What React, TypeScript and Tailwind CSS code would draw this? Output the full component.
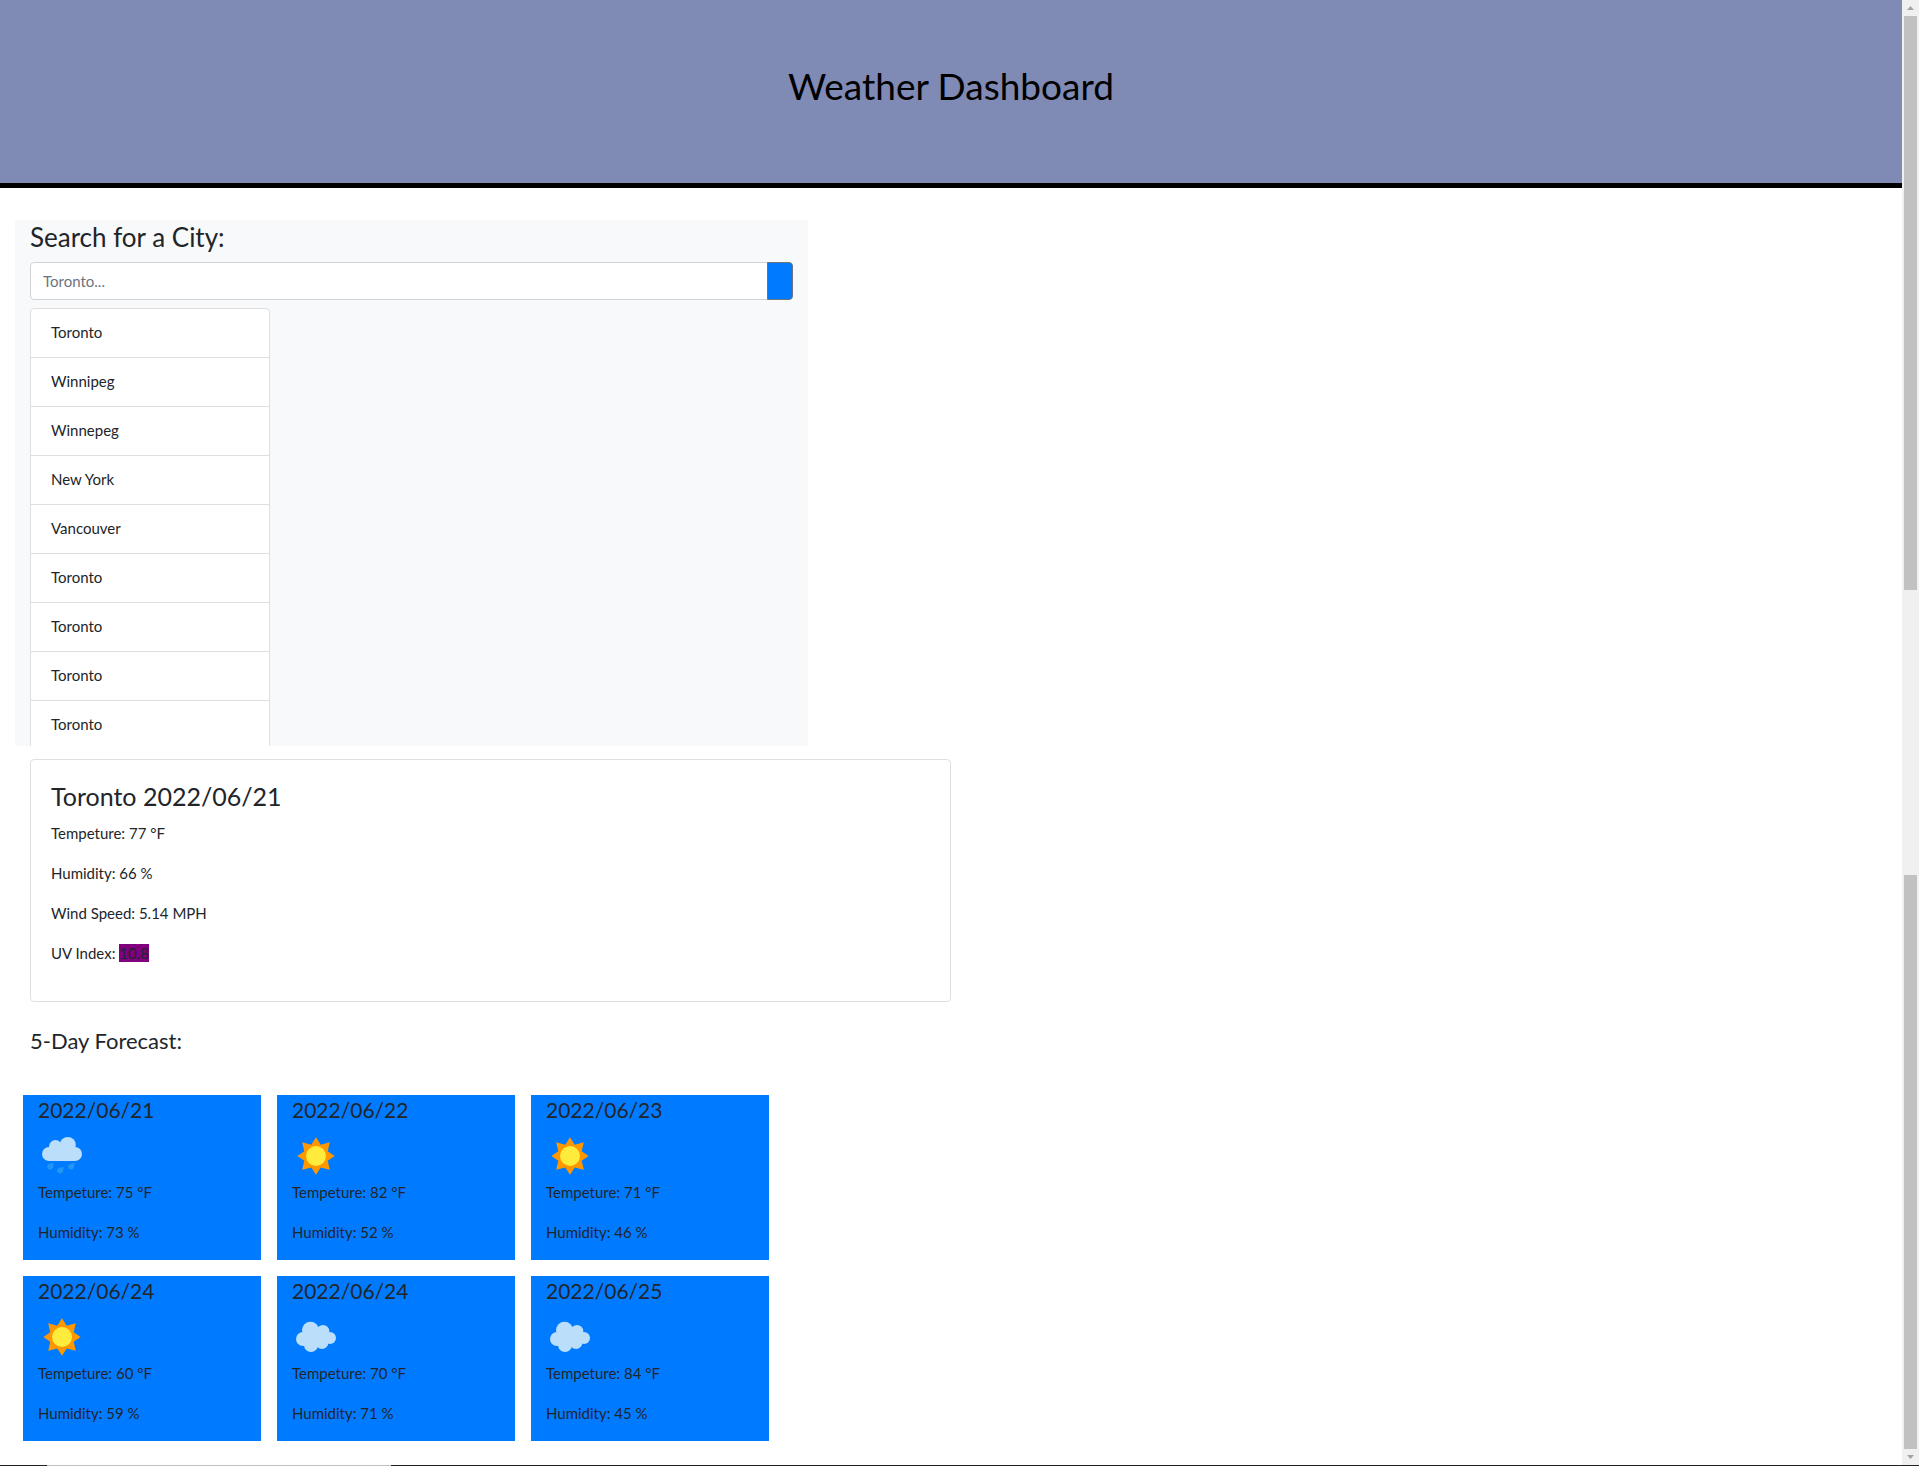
type Sky = 'rain' | 'sun' | 'cloud';

const cities = ['Toronto', 'Winnipeg', 'Winnepeg', 'New York', 'Vancouver', 'Toronto', 'Toronto', 'Toronto', 'Toronto'];

const days: { date: string; sky: Sky; temp: number; humidity: number }[] = [
  { date: '2022/06/21', sky: 'rain', temp: 75, humidity: 73 },
  { date: '2022/06/22', sky: 'sun', temp: 82, humidity: 52 },
  { date: '2022/06/23', sky: 'sun', temp: 71, humidity: 46 },
  { date: '2022/06/24', sky: 'sun', temp: 60, humidity: 59 },
  { date: '2022/06/24', sky: 'cloud', temp: 70, humidity: 71 },
  { date: '2022/06/25', sky: 'cloud', temp: 84, humidity: 45 },
];

function SkyIcon({ sky }: { sky: Sky }) {
  return (
    <svg viewBox="0 0 48 48" className="block size-12" role="img" aria-label={sky}>
      {sky === 'sun' && (
        <>
          <path
            fill="#FF9800"
            d="M24 5.3 28.7 12.7 37.8 10.2 35.7 19.2 42.6 24 35.7 28.8 37.8 37.8 28.7 35.6 24 42.7 19.3 35.6 10.2 37.8 12.3 28.8 5.4 24 12.3 19.2 10.2 10.2 19.3 12.7Z"
          />
          <circle cx="24" cy="24" r="10" fill="#FFEB3B" />
        </>
      )}
      {sky === 'cloud' && (
        <g fill="#BBDEFB">
          <circle cx="18.5" cy="17.2" r="8.5" />
          <circle cx="31" cy="18.3" r="6.3" />
          <circle cx="38" cy="25" r="6" />
          <circle cx="30" cy="29.5" r="6.5" />
          <circle cx="19" cy="32" r="7" />
          <circle cx="11" cy="26" r="7" />
          <path d="M12 20H36V28L28 33H14Z" />
        </g>
      )}
      {sky === 'rain' && (
        <>
          <g fill="#BBDEFB">
            <circle cx="29.8" cy="13" r="8" />
            <circle cx="17.5" cy="14.5" r="6.5" />
            <rect x="4" y="15" width="40" height="14" rx="7" />
            <path d="M14 13H34V22H14Z" />
          </g>
          <g fill="#2196F3">
            <path d="M15.7 31C15.7 31 15.5 35 14.6 36.3 13.7 37.6 11.9 38 10.5 37.1 9.1 36.2 8.7 34.4 9.6 33 10.5 31.7 15.7 31 15.7 31Z" />
            <path d="M25.7 35C25.7 35 25.5 39 24.6 40.3 23.7 41.6 21.9 42 20.5 41.1 19.1 40.2 18.7 38.4 19.6 37 20.5 35.7 25.7 35 25.7 35Z" />
            <path d="M36.7 31C36.7 31 36.5 35 35.6 36.3 34.7 37.6 32.9 38 31.5 37.1 30.1 36.2 29.7 34.4 30.6 33 31.5 31.7 36.7 31 36.7 31Z" />
          </g>
        </>
      )}
    </svg>
  );
}

function Scrollbar() {
  return (
    <div className="flex w-[17px] shrink-0 flex-col items-center bg-[#f0f0f0]" aria-hidden="true">
      <svg viewBox="0 0 17 16" className="h-4 w-full shrink-0">
        <path d="M5 10H12L8.5 6Z" fill="#a3a3a3" />
      </svg>
      <div className="w-[13px] flex-[574] bg-[#c1c1c1]" />
      <div className="flex-[284]" />
      <div className="w-[13px] flex-[574] bg-[#c1c1c1]" />
      <svg viewBox="0 0 17 16" className="h-4 w-full shrink-0">
        <path d="M5 6H12L8.5 10Z" fill="#a3a3a3" />
      </svg>
    </div>
  );
}

export default function App() {
  return (
    <div className="bg-white pr-[13px] font-['Lato',sans-serif] text-[15px] leading-6 text-[#212529]">
      <div className="flex">
        <div className="min-w-0 flex-1 pb-6">
          <header className="border-b-[5px] border-black bg-[#7f8ab5] pt-[62px] pb-[73px] text-center text-black">
            <h1 className="text-[37px] leading-[48px]">Weather Dashboard</h1>
          </header>

          <main className="pt-8">
            <section className="ml-[15px] h-[526px] w-5/12 overflow-hidden bg-[#f8f9fa] px-[15px]">
              <h2>
                <label htmlFor="city" className="block pb-2 text-[26px] leading-[34px]">
                  Search for a City:
                </label>
              </h2>
              <form className="flex h-[38px]" onSubmit={(e) => e.preventDefault()}>
                <input
                  id="city"
                  type="text"
                  placeholder="Toronto..."
                  className="min-w-0 flex-1 rounded-l border border-[#ced4da] bg-white px-3 placeholder:text-[#6c757d]"
                />
                <button type="submit" aria-label="Search" className="-ml-px w-[26px] rounded-r border border-[#6c757d] bg-[#007bff]" />
              </form>
              <ul className="mt-2 w-60 rounded border border-[#dfdfdf] bg-white">
                {cities.map((city, i) => (
                  <li key={i} className="h-[49px] border-b border-[#dfdfdf] px-5 pt-[11px]">
                    {city}
                  </li>
                ))}
              </ul>
            </section>

            <div className="w-1/2 pl-[30px]">
              <section className="mt-[13px] rounded border border-[#dfdfdf] p-5">
                <h2 className="pb-2 text-[25px] leading-[33px]">Toronto 2022/06/21</h2>
                <p className="mb-4">Tempeture: 77 °F</p>
                <p className="mb-4">Humidity: 66 %</p>
                <p className="mb-4">Wind Speed: 5.14 MPH</p>
                <p className="mb-4">
                  UV Index: <span className="bg-[#800080]">10.8</span>
                </p>
              </section>
              <h2 className="mt-6 text-[22px] leading-[29px]">5-Day Forecast:</h2>
            </div>

            <section className="mt-10 ml-[23px] grid w-fit grid-cols-3 gap-4">
              {days.map((day, i) => (
                <article key={i} className="w-[238px] bg-[#007bff] px-[15px]">
                  <h3 className="mb-2 text-[21px] leading-[29px]">{day.date}</h3>
                  <SkyIcon sky={day.sky} />
                  <p className="mb-4">Tempeture: {day.temp} °F</p>
                  <p className="mb-4">Humidity: {day.humidity} %</p>
                </article>
              ))}
            </section>
          </main>
        </div>
        <Scrollbar />
      </div>
      <div className="flex h-px bg-[#222222]">
        <div className="ml-[47px] w-[344px] bg-[#c0c0c0]" />
      </div>
    </div>
  );
}
